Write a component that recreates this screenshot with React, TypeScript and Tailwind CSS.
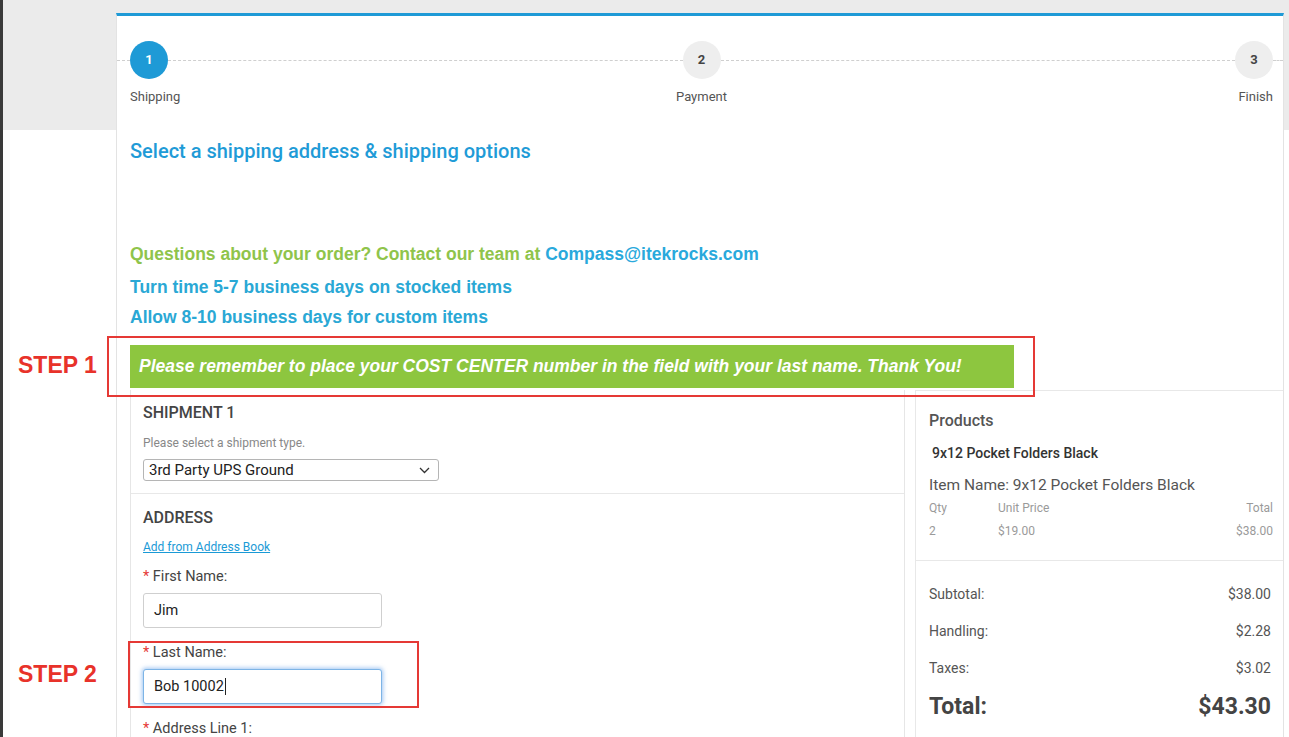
import React from 'react';

const ROBOTO = "font-[Roboto,'Noto_Sans',sans-serif]";
const ARIAL = "font-['Liberation_Sans',Arial,sans-serif]";

interface Step {
  n: number;
  label: string;
  active?: boolean;
}

const STEPS: Step[] = [
  { n: 1, label: 'Shipping', active: true },
  { n: 2, label: 'Payment' },
  { n: 3, label: 'Finish' },
];

const Circle: React.FC<{ step: Step }> = ({ step }) => (
  <div
    className={`flex items-center justify-center w-[38px] h-[38px] rounded-full text-[13px] font-bold shrink-0 ${
      step.active ? 'bg-[#1e9ad6] text-white' : 'bg-[#eeeeee] text-[#444]'
    }`}
  >
    {step.n}
  </div>
);

const Dash: React.FC<{ className?: string }> = ({ className = 'flex-1' }) => (
  <div className={`${className} border-t border-dashed border-[#cfcfcf]`} />
);

const Field: React.FC<{ label: string; value?: string; focused?: boolean; top?: string }> = ({
  label,
  value,
  focused,
  top = 'mt-[15px]',
}) => (
  <div className={top}>
    <div className="text-[14.5px] leading-[20px] text-[#444]">
      <span className="text-[#e53935]">*</span> {label}
    </div>
    {value !== undefined && (
      <div
        className={`mt-[6px] w-[239px] h-[35px] rounded-[3px] flex items-center px-[10px] text-[14.5px] text-[#222] bg-white ${
          focused
            ? 'border border-[#7db4e6] shadow-[0_0_4px_1px_rgba(80,150,230,0.55)]'
            : 'border border-[#cfcfcf]'
        }`}
      >
        {value}
        {focused && <span className="inline-block w-px h-[17px] bg-[#222] ml-px" />}
      </div>
    )}
  </div>
);

const TotalRow: React.FC<{ label: string; value: string; className?: string }> = ({ label, value, className }) => (
  <div className={`flex justify-between text-[14px] leading-[20px] text-[#555] ${className ?? ''}`}>
    <span>{label}</span>
    <span>{value}</span>
  </div>
);

export default function App() {
  return (
    <div
      className={`relative h-[737px] w-full overflow-hidden border-l-[3px] border-[#3a3a3a] bg-[linear-gradient(to_bottom,#ebebeb_0,#ebebeb_130px,#ffffff_130px)] ${ROBOTO}`}
    >
      {/* Card */}
      <div className="ml-[113px] mt-[13px] w-[1168px] h-[800px] bg-white border-t-[3px] border-t-[#1e9ad6] border-x border-x-[#e3e3e3]">
        {/* Stepper */}
        <div className="pt-[25px] flex items-center">
          <Dash className="w-[13px]" />
          <Circle step={STEPS[0]} />
          <Dash />
          <Circle step={STEPS[1]} />
          <Dash />
          <Circle step={STEPS[2]} />
          <Dash className="w-[10px]" />
        </div>
        <div className="pl-[13px] pr-[10px] mt-[9px] grid grid-cols-3 text-[13px] leading-[18px] text-[#555]">
          <span>{STEPS[0].label}</span>
          <span className="text-center">{STEPS[1].label}</span>
          <span className="text-right">{STEPS[2].label}</span>
        </div>

        <div className="pl-[13px]">
          <h2 className="mt-[31px] text-[20px] leading-[28px] font-medium text-[#1f9bd7]">
            Select a shipping address &amp; shipping options
          </h2>

          <div className={`${ARIAL} font-bold text-[17.5px]`}>
            <p className="mt-[77px] leading-[24px] text-[#8fc44b]">
              Questions about your order? Contact our team at{' '}
              <span className="text-[#29a9dc]">Compass@itekrocks.com</span>
            </p>
            <p className="mt-[9px] leading-[24px] text-[#2aa8d5]">Turn time 5-7 business days on stocked items</p>
            <p className="mt-[6px] leading-[24px] text-[#2aa8d5]">Allow 8-10 business days for custom items</p>
          </div>

          {/* Banner */}
          <div
            className={`${ARIAL} mt-[16px] w-[884px] h-[43px] bg-[#8dc63f] flex items-center pl-[9px] text-white italic font-bold text-[17.5px]`}
          >
            Please remember to place your COST CENTER number in the field with your last name. Thank You!
          </div>

          {/* Columns */}
          <div className="mt-[2px] flex">
            {/* Left column */}
            <div className="w-[775px] h-[360px] border-x border-[#e6e6e6]">
              <div className="pl-[12px] pt-[13px] pb-[12px] border-b border-[#e8e8e8]">
                <div className="text-[16px] leading-[20px] font-medium text-[#444] uppercase">Shipment 1</div>
                <div className="mt-[12px] text-[12px] leading-[16px] text-[#888]">Please select a shipment type.</div>
                <div className="mt-[8px] w-[296px] h-[22px] rounded-[3px] border border-[#b5b5b5] flex items-center justify-between pl-[5px] pr-[8px] text-[15px] text-[#222] bg-white">
                  <span>3rd Party UPS Ground</span>
                  <svg width="11" height="7" viewBox="0 0 11 7" fill="none">
                    <path d="M1 1l4.5 4.5L10 1" stroke="#333" strokeWidth="1.3" />
                  </svg>
                </div>
              </div>
              <div className="pl-[12px] pt-[14px]">
                <div className="text-[16px] leading-[20px] font-medium text-[#444] uppercase">Address</div>
                <a className="block mt-[11px] text-[12px] leading-[16px] text-[#1a9ad6] underline">Add from Address Book</a>
                <Field label="First Name:" value="Jim" top="mt-[12px]" />
                <Field label="Last Name:" value="Bob 10002" focused />
                <Field label="Address Line 1:" />
              </div>
            </div>

            {/* Right column */}
            <div className="ml-[10px] w-[368px] h-[360px] border-t border-l border-[#e8e8e8]">
              <div className="pl-[13px] pr-[10px] pt-[20px] pb-[21px] border-b border-[#e8e8e8]">
                <div className="text-[16px] leading-[20px] font-medium text-[#555]">Products</div>
                <div className="mt-[13px] pl-[3px] text-[14px] leading-[18px] font-medium text-[#333]">
                  9x12 Pocket Folders Black
                </div>
                <div className="mt-[13px] text-[15.5px] leading-[20px] text-[#555]">Item Name: 9x12 Pocket Folders Black</div>
                <div className="mt-[5px] flex text-[12px] leading-[16px] text-[#9a9a9a]">
                  <span className="w-[69px]">Qty</span>
                  <span className="flex-1">Unit Price</span>
                  <span>Total</span>
                </div>
                <div className="mt-[7px] flex text-[12px] leading-[16px] text-[#9a9a9a]">
                  <span className="w-[69px]">2</span>
                  <span className="flex-1">$19.00</span>
                  <span>$38.00</span>
                </div>
              </div>
              <div className="pl-[13px] pr-[12px] pt-[23px]">
                <TotalRow label="Subtotal:" value="$38.00" />
                <TotalRow label="Handling:" value="$2.28" className="mt-[17px]" />
                <TotalRow label="Taxes:" value="$3.02" className="mt-[17px]" />
                <div className="mt-[13px] flex justify-between text-[23px] leading-[32px] font-bold text-[#444]">
                  <span>Total:</span>
                  <span>$43.30</span>
                </div>
              </div>
            </div>
          </div>
        </div>
      </div>

      {/* Annotations */}
      <div className="absolute left-[104px] top-[336px] w-[928px] h-[61px] border-2 border-[#e53935]" />
      <div className={`${ARIAL} absolute left-[15px] top-[351px] text-[23px] leading-[28px] font-bold text-[#e8322a]`}>
        STEP 1
      </div>
      <div className="absolute left-[125px] top-[641px] w-[291px] h-[67px] border-2 border-[#e53935]" />
      <div className={`${ARIAL} absolute left-[15px] top-[660px] text-[23px] leading-[28px] font-bold text-[#e8322a]`}>
        STEP 2
      </div>
    </div>
  );
}
